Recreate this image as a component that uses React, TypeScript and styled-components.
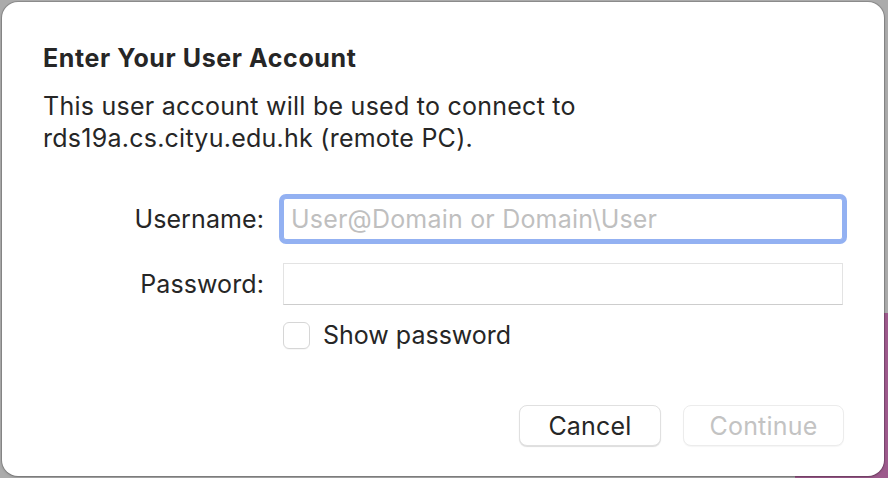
import React from "react";
import styled, { createGlobalStyle } from "styled-components";

const GlobalStyle = createGlobalStyle`
  html, body {
    margin: 0;
    padding: 0;
    width: 888px;
    height: 478px;
    overflow: hidden;
  }
  body {
    background:
      linear-gradient(#9d5a8c, #9d5a8c) no-repeat right bottom / 93px 165px,
      #ababab;
    font-family: Inter, "Liberation Sans", sans-serif;
    -webkit-font-smoothing: antialiased;
  }
`;

const Sheet = styled.div`
  box-sizing: border-box;
  margin: 2px 0 0 2px;
  width: 882px;
  height: 474px;
  background: #ffffff;
  border-radius: 16px;
  box-shadow: 0 0 0 1px rgba(0, 0, 0, 0.16), 0 1px 3px rgba(0, 0, 0, 0.2);
  padding: 41px 41px 0 41px;
  display: flex;
  flex-direction: column;
  color: #262626;
`;

const Title = styled.h1`
  margin: 0;
  font-size: 25px;
  font-weight: 700;
  line-height: 30px;
  letter-spacing: 0.6px;
`;

const Message = styled.p`
  margin: 17px 0 0;
  font-size: 25px;
  line-height: 32px;
  font-weight: 400;
  letter-spacing: 0.25px;
`;

const Form = styled.div`
  margin-top: 44px;
  display: grid;
  grid-template-columns: 221px 1fr;
  column-gap: 19px;
  row-gap: 23px;
  align-items: center;
`;

const Label = styled.label`
  text-align: right;
  font-size: 25px;
  letter-spacing: 0.1px;
`;

const Field = styled.input<{ $focused?: boolean }>`
  box-sizing: border-box;
  height: 42px;
  width: 100%;
  margin: 0;
  padding: 0 7px;
  font-family: inherit;
  font-size: 25px;
  letter-spacing: 0.2px;
  color: #262626;
  background: #fff;
  border: 1px solid ${(p) => (p.$focused ? "#93b1f2" : "#e3e3e3")};
  border-bottom-color: ${(p) => (p.$focused ? "#93b1f2" : "#cdcdcd")};
  outline: none;
  border-radius: ${(p) => (p.$focused ? "3px" : "0")};
  box-shadow: ${(p) => (p.$focused ? "0 0 0 4px #93b1f2" : "none")};
  &::placeholder {
    color: #bfbfbf;
  }
`;

const CheckRow = styled.label`
  grid-column: 2;
  display: flex;
  align-items: center;
  gap: 13px;
  margin-top: -8px;
  font-size: 25px;
  letter-spacing: 0px;
`;

const Box = styled.span`
  box-sizing: border-box;
  flex: none;
  width: 27px;
  height: 27px;
  border-radius: 6px;
  border: 1px solid #d6d6d6;
  background: #fff;
  box-shadow: 0 1px 0 rgba(0, 0, 0, 0.03);
`;

const Actions = styled.div`
  margin-top: auto;
  margin-bottom: 30px;
  margin-right: -1px;
  display: flex;
  justify-content: flex-end;
  gap: 22px;
`;

const Button = styled.button<{ $disabled?: boolean; $w: number }>`
  box-sizing: border-box;
  width: ${(p) => p.$w}px;
  height: 41px;
  border-radius: 8px;
  border: 1px solid ${(p) => (p.$disabled ? "#ececec" : "#e0e0e0")};
  background: #fff;
  box-shadow: ${(p) =>
    p.$disabled ? "0 1px 1px rgba(0,0,0,0.04)" : "0 1px 1px rgba(0,0,0,0.14)"};
  font-family: inherit;
  font-size: 25px;
  letter-spacing: 0.2px;
  color: ${(p) => (p.$disabled ? "#c3c3c3" : "#262626")};
  padding: 0;
`;

export default function App() {
  return (
    <>
      <GlobalStyle />
      <Sheet>
        <Title>Enter Your User Account</Title>
        <Message>
          This user account will be used to connect to
          <br />
          rds19a.cs.cityu.edu.hk (remote PC).
        </Message>
        <Form>
          <Label>Username:</Label>
          <Field $focused placeholder="User@Domain or Domain\User" />
          <Label>Password:</Label>
          <Field type="password" />
          <CheckRow>
            <Box />
            Show password
          </CheckRow>
        </Form>
        <Actions>
          <Button $w={142}>Cancel</Button>
          <Button $w={161} $disabled>
            Continue
          </Button>
        </Actions>
      </Sheet>
    </>
  );
}
